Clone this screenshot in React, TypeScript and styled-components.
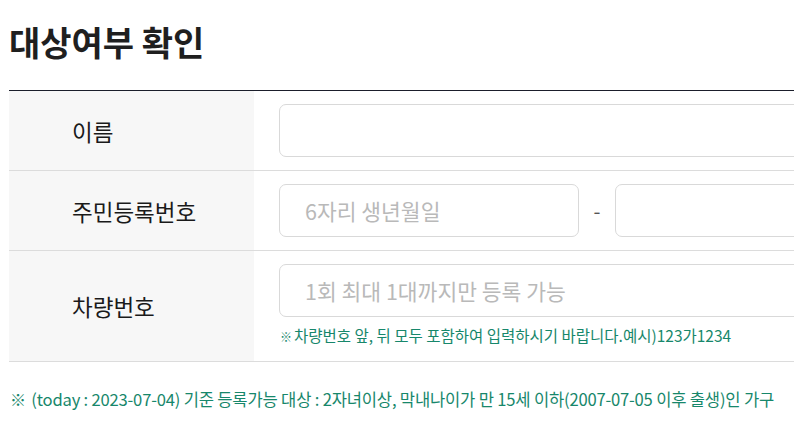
import React from 'react';
import styled, { createGlobalStyle } from 'styled-components';

const GlobalStyle = createGlobalStyle`
  html, body {
    margin: 0;
    padding: 0;
    background: #fff;
    overflow: hidden;
  }
  body {
    font-family: "Noto Sans CJK KR", "Noto Sans", sans-serif;
    color: #222;
  }
`;

const Wrap = styled.div`
  width: 1100px;
  padding: 0 0 0 9px;
`;

const Title = styled.h2`
  margin: 0;
  padding-top: 18px;
  height: 90px;
  box-sizing: border-box;
  font-size: 34px;
  font-weight: 700;
  line-height: 48px;
  color: #1f1f1f;
`;

const Table = styled.div`
  border-top: 1px solid #1b1e2b;
`;

const Row = styled.div`
  display: grid;
  grid-template-columns: 245px 1fr;
  border-bottom: 1px solid #dcdcdc;
`;

const Label = styled.div`
  background: #f7f7f7;
  display: flex;
  align-items: center;
  padding-left: 63px;
  font-size: 22.5px;
  font-weight: 400;
  color: #1a1a1a;
`;

const Cell = styled.div<{ $bottom?: number }>`
  padding: 13px 0 ${(p) => p.$bottom ?? 13}px 25px;
  display: flex;
  flex-direction: column;
`;

const Line = styled.div`
  display: flex;
  align-items: center;
`;

const Input = styled.input<{ $w?: number }>`
  box-sizing: border-box;
  height: 53px;
  width: ${(p) => (p.$w ? `${p.$w}px` : '100%')};
  border: 1px solid #d9d9d9;
  border-radius: 7px;
  padding: 0 25px;
  font-family: "Noto Sans CJK KR", "Noto Sans", sans-serif;
  font-size: 21.5px;
  color: #333;
  outline: none;
  &::placeholder {
    color: #b9b9b9;
  }
`;

const Dash = styled.span`
  width: 36px;
  text-align: center;
  font-size: 20px;
  color: #555;
`;

const Hint = styled.p`
  margin: 7px 0 0 1px;
  font-size: 15.5px;
  color: #17876b;
  line-height: 22px;
`;

const Mark = styled.span<{ $size?: number }>`
  font-size: ${(p) => p.$size ?? 12}px;
  font-weight: 700;
  margin-right: 2px;
`;

const Note = styled.p`
  margin: 26px 0 0 1px;
  font-size: 16.6px;
  color: #17876b;
  letter-spacing: -0.2px;
  line-height: 22px;
`;

export default function App() {
  return (
    <Wrap>
      <GlobalStyle />
      <Title>대상여부 확인</Title>
      <Table>
        <Row>
          <Label>이름</Label>
          <Cell>
            <Input />
          </Cell>
        </Row>
        <Row>
          <Label>주민등록번호</Label>
          <Cell>
            <Line>
              <Input $w={300} placeholder="6자리 생년월일" />
              <Dash>-</Dash>
              <Input $w={500} />
            </Line>
          </Cell>
        </Row>
        <Row>
          <Label>차량번호</Label>
          <Cell $bottom={13}>
            <Input placeholder="1회 최대 1대까지만 등록 가능" />
            <Hint>
              <Mark>※</Mark>차량번호 앞, 뒤 모두 포함하여 입력하시기 바랍니다.예시)123가1234
            </Hint>
          </Cell>
        </Row>
      </Table>
      <Note>
        <Mark $size={16}>※</Mark> (today : 2023-07-04) 기준 등록가능 대상 : 2자녀이상, 막내나이가 만 15세 이하(2007-07-05 이후 출생)인 가구
      </Note>
    </Wrap>
  );
}
